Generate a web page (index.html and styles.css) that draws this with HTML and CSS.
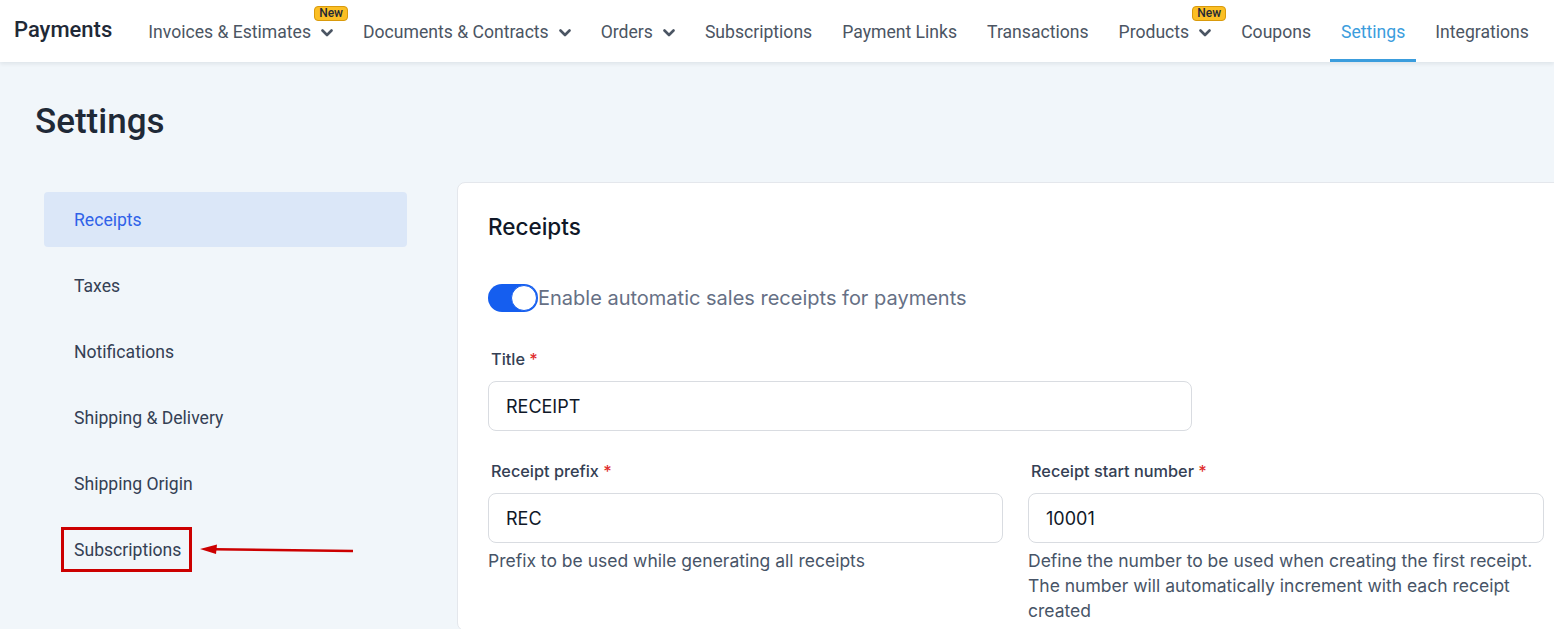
FILE: index.html
```html
<!DOCTYPE html>
<html lang="en">
<head>
    <meta charset="utf-8">
    <title>Payments - Settings</title>
    <link rel="stylesheet" href="styles.css">
</head>
<body>
    <header class="topbar">
        <div class="brand">Payments</div>
        <nav class="nav">
            <a class="nav-item">Invoices &amp; Estimates <svg class="chev" viewBox="0 0 12 8"><path d="M1.5 1.5 6 6l4.5-4.5"/></svg><span class="badge">New</span></a>
            <a class="nav-item">Documents &amp; Contracts <svg class="chev" viewBox="0 0 12 8"><path d="M1.5 1.5 6 6l4.5-4.5"/></svg></a>
            <a class="nav-item">Orders <svg class="chev" viewBox="0 0 12 8"><path d="M1.5 1.5 6 6l4.5-4.5"/></svg></a>
            <a class="nav-item">Subscriptions</a>
            <a class="nav-item">Payment Links</a>
            <a class="nav-item">Transactions</a>
            <a class="nav-item">Products <svg class="chev" viewBox="0 0 12 8"><path d="M1.5 1.5 6 6l4.5-4.5"/></svg><span class="badge">New</span></a>
            <a class="nav-item">Coupons</a>
            <a class="nav-item active">Settings</a>
            <a class="nav-item">Integrations</a>
        </nav>
    </header>

    <main class="page">
        <h1 class="page-title">Settings</h1>
        <div class="layout">
            <ul class="side">
                <li class="side-item active">Receipts</li>
                <li class="side-item">Taxes</li>
                <li class="side-item">Notifications</li>
                <li class="side-item">Shipping &amp; Delivery</li>
                <li class="side-item">Shipping Origin</li>
                <li class="side-item"><span class="callout">Subscriptions</span>
                    <svg class="arrow" viewBox="0 0 154 14"><path d="M14 6.2 L153 8" /><polygon points="0,6 17,1.5 16,11" /></svg>
                </li>
            </ul>

            <section class="card">
                <h2 class="card-title">Receipts</h2>
                <label class="toggle-row">
                    <span class="toggle"><span class="knob"></span></span>
                    Enable automatic sales receipts for payments
                </label>

                <div class="field title-field">
                    <div class="label">Title <span class="req">*</span></div>
                    <div class="input">RECEIPT</div>
                </div>

                <div class="row">
                    <div class="field">
                        <div class="label">Receipt prefix <span class="req">*</span></div>
                        <div class="input">REC</div>
                        <p class="help">Prefix to be used while generating all receipts</p>
                    </div>
                    <div class="field">
                        <div class="label">Receipt start number <span class="req">*</span></div>
                        <div class="input">10001</div>
                        <p class="help">Define the number to be used when creating the first receipt. The number will automatically increment with each receipt created</p>
                    </div>
                </div>
            </section>
        </div>
    </main>
</body>
</html>
```

FILE: styles.css
```css
body {
    margin: 0;
    font-family: Roboto, "Noto Sans", sans-serif;
    background-color: #f1f6fa;
    overflow: hidden;
    height: 629px;
}

.topbar {
    display: flex;
    align-items: center;
    height: 62px;
    background-color: #ffffff;
    box-shadow: 0 2px 4px rgba(15, 23, 42, 0.08);
    padding-left: 14px;
    position: relative;
    z-index: 1;
}

.brand {
    font-size: 22px;
    font-weight: 500;
    color: #1f2937;
    margin-right: 25px;
    margin-top: -4px;
}

.nav {
    display: flex;
    height: 100%;
    gap: 8px;
}

.nav-item {
    position: relative;
    display: flex;
    align-items: center;
    gap: 10px;
    padding: 0 11px;
    font-size: 17.6px;
    color: #4b5563;
    white-space: nowrap;
    border-bottom: 3px solid transparent;
    box-sizing: border-box;
    padding-top: 5px;
}

.nav-item.active {
    color: #3b9ddd;
    border-bottom-color: #3b9ddd;
}

.chev {
    width: 12px;
    height: 8px;
    fill: none;
    stroke: #4b5563;
    stroke-width: 2.6;
    stroke-linecap: round;
    stroke-linejoin: round;
    margin-top: 1px;
}

.badge {
    position: absolute;
    top: 6px;
    right: -4px;
    background-color: #fbbf24;
    border: 1px solid #d99a0c;
    border-radius: 4px;
    font-size: 12px;
    font-weight: 500;
    line-height: 13px;
    padding: 0 4px;
    color: #1f2937;
}

.page {
    padding: 0 0 0 35px;
}

.page-title {
    margin: 0;
    padding-top: 38px;
    font-size: 35px;
    font-weight: 500;
    color: #1f2937;
    line-height: 44px;
}

.layout {
    display: flex;
    gap: 50px;
    margin-top: 38px;
}

.side {
    list-style: none;
    margin: 10px 0 0 9px;
    padding: 0;
    width: 363px;
    flex-shrink: 0;
    display: flex;
    flex-direction: column;
    gap: 11px;
}

.side-item {
    position: relative;
    display: flex;
    align-items: center;
    height: 55px;
    padding-left: 30px;
    padding-top: 1px;
    box-sizing: border-box;
    font-size: 17.6px;
    color: #344054;
    border-radius: 4px;
}

.side-item.active {
    background-color: #dbe7f8;
    color: #2f62e8;
}

.callout {
    position: relative;
}

.callout::after {
    content: "";
    position: absolute;
    left: -13px;
    right: -11px;
    top: -13px;
    bottom: -12px;
    border: 3px solid #cc0000;
}

.arrow {
    position: absolute;
    left: 156px;
    top: 21px;
    width: 154px;
    height: 14px;
}

.arrow path {
    stroke: #cc0000;
    stroke-width: 2.5;
    fill: none;
}

.arrow polygon {
    fill: #cc0000;
}

.card {
    width: 1120px;
    min-height: 449px;
    flex-shrink: 0;
    background-color: #ffffff;
    border: 1px solid #e4e7ec;
    border-radius: 8px;
    padding: 28px 30px 0 30px;
    font-family: Inter, "Noto Sans", sans-serif;
    box-sizing: border-box;
}

.card-title {
    margin: 0;
    font-size: 22.5px;
    font-weight: 500;
    color: #101828;
    line-height: 32px;
}

.toggle-row {
    display: flex;
    align-items: center;
    margin-top: 41px;
    font-size: 20px;
    color: #667085;
}

.toggle {
    display: flex;
    align-items: center;
    justify-content: flex-end;
    width: 50px;
    height: 28px;
    border-radius: 14px;
    background-color: #155eef;
    padding: 0 1px;
    box-sizing: border-box;
}

.knob {
    width: 24px;
    height: 24px;
    border-radius: 50%;
    background-color: #ffffff;
    border: 1px solid #155eef;
}

.field {
    display: flex;
    flex-direction: column;
}

.title-field {
    margin-top: 36px;
    width: 704px;
}

.label {
    font-size: 16.3px;
    font-weight: 500;
    color: #344054;
    padding-left: 3px;
    line-height: 22px;
}

.req {
    color: #e02d2d;
}

.input {
    margin-top: 11px;
    height: 50px;
    box-sizing: border-box;
    border: 1px solid #d9dce1;
    border-radius: 8px;
    padding: 0 17px;
    display: flex;
    align-items: center;
    font-size: 18px;
    color: #101828;
}

.row {
    display: grid;
    grid-template-columns: 515px 516px;
    gap: 25px;
    margin-top: 29px;
}

.help {
    margin: 5px 0 0 0;
    font-size: 17.5px;
    line-height: 25px;
    color: #475467;
}
```
